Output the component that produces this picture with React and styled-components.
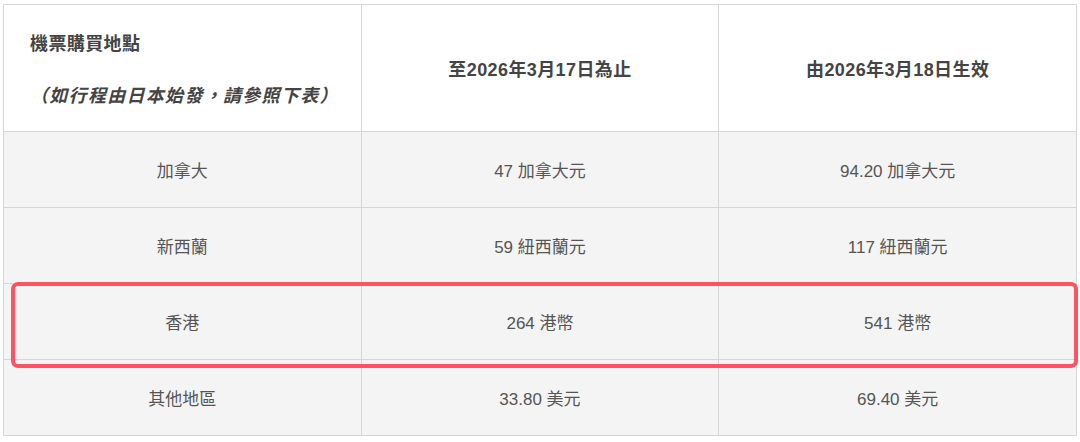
import React from 'react';
import styled, {createGlobalStyle} from 'styled-components';

const GlobalStyle = createGlobalStyle`
  body {
    margin: 0;
    background: #ffffff;
    font-family: "Liberation Sans", "Noto Sans CJK TC", sans-serif;
  }
`;

const Page = styled.div`
  position: relative;
  padding: 4px 0 0 3px;
`;

const Table = styled.table`
  width: 1074px;
  border-collapse: collapse;
  table-layout: fixed;
  border: 1px solid #cfcfcf;
`;

const HeadCell = styled.th`
  height: 126px;
  padding: 0 0 0 ${p => (p.$left ? '26px' : '0')};
  background: #ffffff;
  border: 1px solid #d6d6d6;
  color: #444444;
  font-size: 18px;
  font-weight: 700;
  letter-spacing: 0.4px;
  text-align: ${p => (p.$left ? 'left' : 'center')};
  vertical-align: middle;
`;

const HeadStack = styled.div`
  display: flex;
  flex-direction: column;
  gap: 26px;
`;

const Note = styled.span`
  font-style: italic;
  letter-spacing: 1.3px;
`;

const Row = styled.tr`
  height: 76px;
`;

const Cell = styled.td`
  background: #f4f4f4;
  border: 1px solid #d6d6d6;
  color: #555555;
  font-size: 17px;
  text-align: center;
  vertical-align: middle;
`;

const Highlight = styled.div`
  position: absolute;
  left: 11px;
  top: 282px;
  width: 1067px;
  height: 86px;
  box-sizing: border-box;
  border: 4px solid #ff5263;
  border-radius: 7px;
  pointer-events: none;
`;

const rows = [
  ['加拿大', '47 加拿大元', '94.20 加拿大元'],
  ['新西蘭', '59 紐西蘭元', '117 紐西蘭元'],
  ['香港', '264 港幣', '541 港幣'],
  ['其他地區', '33.80 美元', '69.40 美元'],
];

const App = () => {
  return (
    <Page>
      <GlobalStyle />
      <Table>
        <thead>
          <tr>
            <HeadCell $left>
              <HeadStack>
                <span>機票購買地點</span>
                <Note>（如行程由日本始發，請參照下表）</Note>
              </HeadStack>
            </HeadCell>
            <HeadCell>至2026年3月17日為止</HeadCell>
            <HeadCell>由2026年3月18日生效</HeadCell>
          </tr>
        </thead>
        <tbody>
          {rows.map(r => (
            <Row key={r[0]}>
              {r.map(c => <Cell key={c}>{c}</Cell>)}
            </Row>
          ))}
        </tbody>
      </Table>
      <Highlight />
    </Page>
  );
};

export default App;
